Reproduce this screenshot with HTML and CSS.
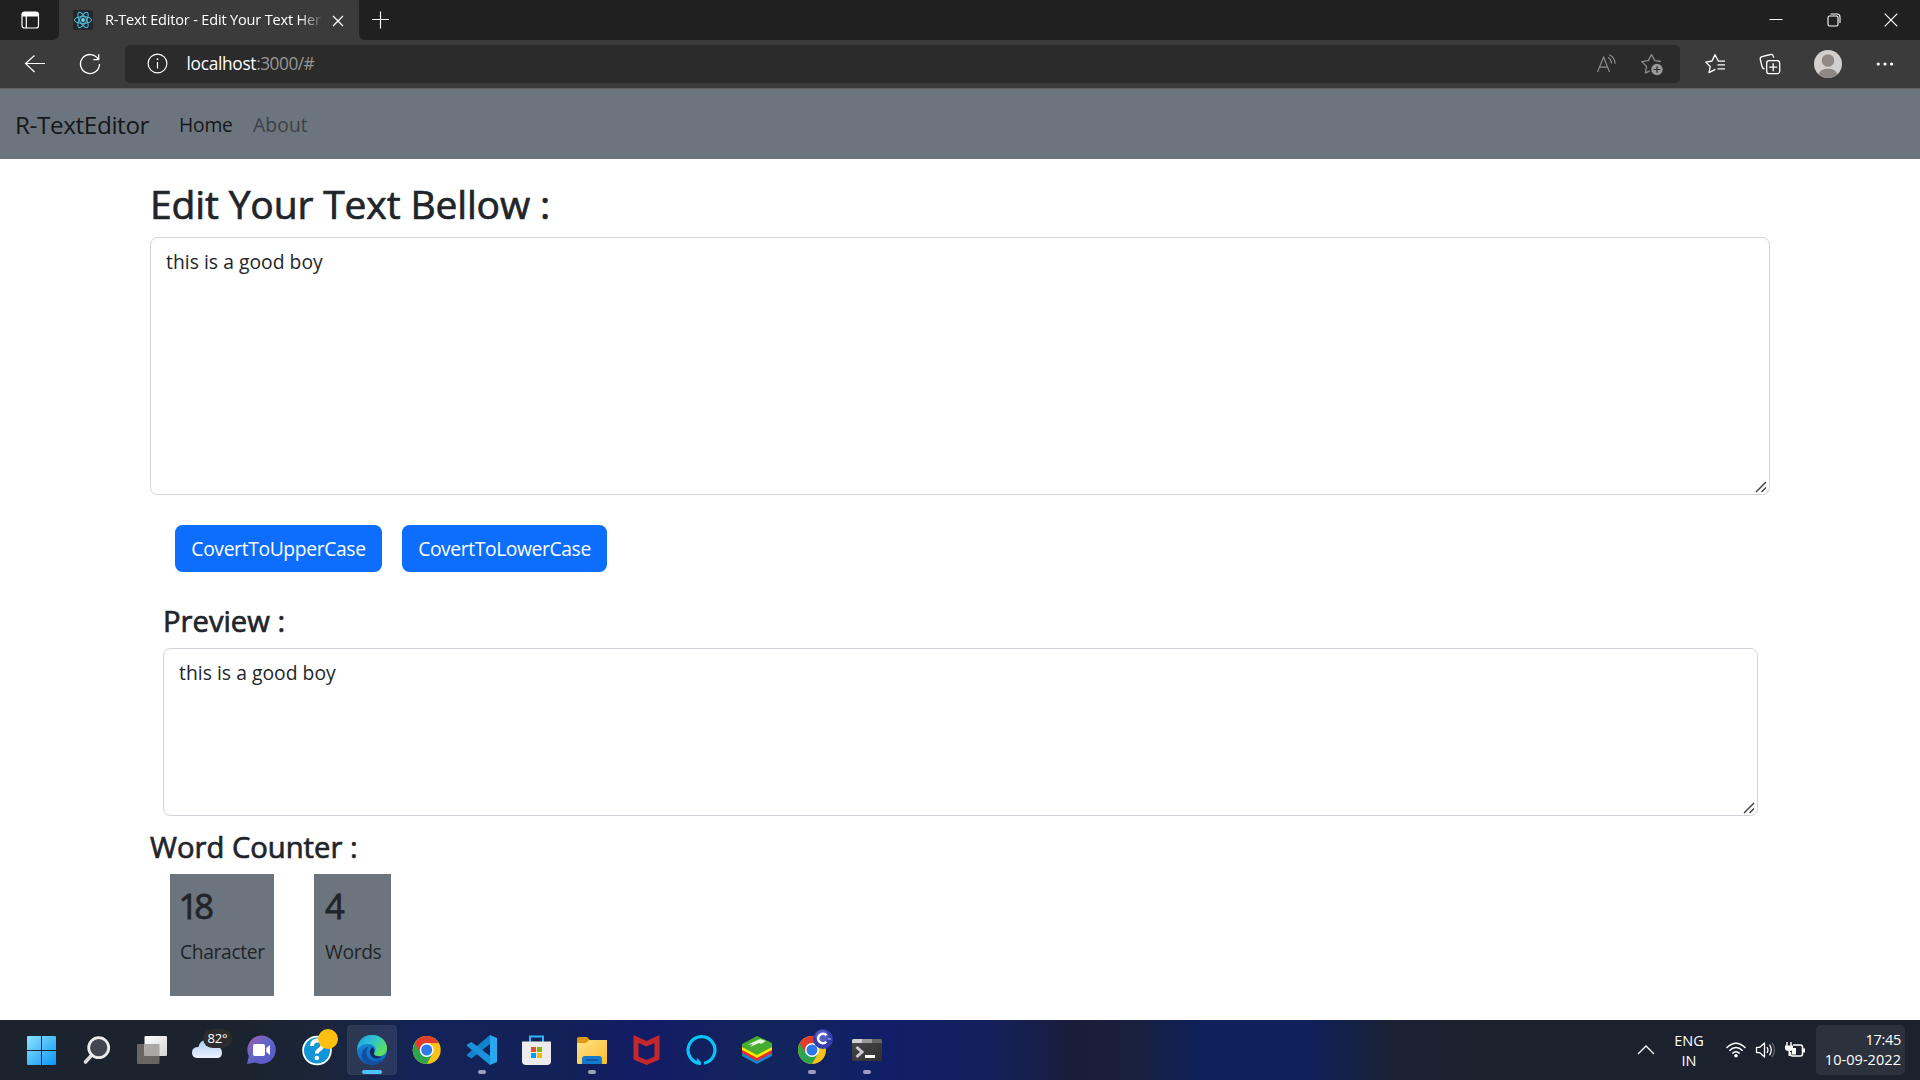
FILE: index.html
```html
<!DOCTYPE html>
<html lang="en">
<head>
<meta charset="utf-8">
<title>R-Text Editor - Edit Your Text Here</title>
<link rel="stylesheet" href="styles.css">
</head>
<body>
<div class="screen">
  <header class="tabstrip">
    <div class="tab-actions">
      <svg width="20" height="20" viewBox="0 0 20 20"><rect x="2" y="2" width="16.5" height="16" rx="2.6" fill="none" stroke="#fff" stroke-width="1.2"/><path d="M2 6.5V4.5Q2 2 4.5 2h11.5q2.500 0 2.500 2.500v2z" fill="#fff"/><path d="M6.300 6v12" stroke="#fff" stroke-width="1.200"/></svg>
    </div>
    <div class="tab">
      <svg class="favicon" width="20" height="20" viewBox="0 0 20 20"><rect width="20" height="20" rx="2" fill="#23272b"/><g fill="none" stroke="#53c1de" stroke-width="1"><ellipse cx="10" cy="10" rx="8.600" ry="3.400"/><ellipse cx="10" cy="10" rx="8.600" ry="3.400" transform="rotate(60 10 10)"/><ellipse cx="10" cy="10" rx="8.600" ry="3.400" transform="rotate(120 10 10)"/></g><circle cx="10" cy="10" r="1.900" fill="#61dafb"/></svg>
      <span class="tab-title">R-Text Editor - Edit Your Text Her</span>
      <svg class="tab-close" width="12" height="12" viewBox="0 0 12 12"><path d="M1 1l10 10M11 1L1 11" stroke="#fff" stroke-width="1.300"/></svg>
    </div>
    <svg class="new-tab" width="18" height="18" viewBox="0 0 18 18"><path d="M8.500 .5v17M0 8.500h17" stroke="#fff" stroke-width="1.200"/></svg>
    <div class="window-controls">
      <svg width="14" height="14" viewBox="0 0 14 14"><path d="M.5 6.500h13" stroke="#fff"/></svg>
      <svg width="14" height="14" viewBox="0 0 14 14"><rect x="1" y="3" width="10" height="10" rx="1.500" fill="none" stroke="#fff" stroke-width="1.100"/><path d="M3.500 1h6.500q3 0 3 3v6" fill="none" stroke="#fff" stroke-width="1.100"/></svg>
      <svg width="14" height="14" viewBox="0 0 14 14"><path d="M.7.7l12.600 12.600M13.300.7L.7 13.300" stroke="#fff" stroke-width="1.200"/></svg>
    </div>
  </header>

  <div class="toolbar">
    <svg width="22" height="20" viewBox="0 0 22 20"><path d="M21 9.500H1.500M10.500 1.500L1.500 9.500 10.500 18" fill="none" stroke="#fff" stroke-width="1.200"/></svg>
    <svg class="refresh" width="22" height="22" viewBox="0 0 22 22"><path d="M19.200 6.200A9.500 9.500 0 1 0 20.500 11M19.700 1.300v5.300h-5.400" fill="none" stroke="#fff" stroke-width="1.300"/></svg>
    <div class="address">
      <svg width="22" height="22" viewBox="0 0 22 22"><circle cx="10.500" cy="10.500" r="9.400" fill="none" stroke="#fff" stroke-width="1.200"/><path d="M10.500 9v6.500" stroke="#fff" stroke-width="1.200"/><circle cx="10.500" cy="6.200" r=".9" fill="#fff"/></svg>
      <span class="url"><span class="host">localhost</span><span class="port">:3000/#</span></span>
      <svg class="read" width="22" height="20" viewBox="0 0 22 20"><path d="M1.500 18L7.600 3 13.500 18M3.400 13.200h8.300M12 3.200q3.200 1.800 3.500 6.300M13.300.8q5.400 2.500 5.800 9" fill="none" stroke="#8d8d8d" stroke-width="1.200"/></svg>
      <svg class="star-add" width="24" height="24" viewBox="0 0 24 24"><path d="M20.800 8.500l-6-.9L11.500 1.500 8.300 7.600 1.700 8.600l4.800 4.800-1.100 6.700 4.300-2.200" fill="none" stroke="#8d8d8d" stroke-width="1.300" stroke-linejoin="round"/><circle cx="17" cy="16.500" r="5.700" fill="#9a9a9a"/><path d="M17 13.200v6.600M13.700 16.500h6.600" stroke="#2b2b2b" stroke-width="1.200"/></svg>
    </div>
    <svg class="favs" width="22" height="22" viewBox="0 0 22 22"><path d="M21 8.200h-6.600L11 1.600 8 8 1.800 9.100l4.400 4.400L5.100 19.600l6.200-3.200M13.500 11.800h7.500M13.500 15.800h7.500" fill="none" stroke="#fff" stroke-width="1.300" stroke-linejoin="round"/></svg>
    <svg class="collections" width="22" height="22" viewBox="0 0 22 22"><rect x="7.700" y="7.700" width="13" height="13" rx="2.500" fill="none" stroke="#fff" stroke-width="1.300"/><path d="M14.200 10.200v8M10.200 14.200h8M5.500 16Q3.500 15.500 3 13.500L1.300 6.500Q.8 4.300 3 3.700L11.500 1.500q2.300-.4 2.900 1.900l.3 1.300" fill="none" stroke="#fff" stroke-width="1.300"/></svg>
    <svg class="avatar" width="28" height="28" viewBox="0 0 28 28"><defs><clipPath id="av"><circle cx="14" cy="14" r="14"/></clipPath></defs><g clip-path="url(#av)"><rect width="28" height="28" fill="#d2d0ce"/><circle cx="14" cy="10.500" r="6.300" fill="#8f8884"/><ellipse cx="14" cy="26.500" rx="10" ry="8" fill="#8f8884"/></g></svg>
    <svg class="more" width="18" height="4" viewBox="0 0 18 4"><g fill="#fff"><circle cx="2.300" cy="2" r="1.600"/><circle cx="9" cy="2" r="1.600"/><circle cx="15.600" cy="2" r="1.600"/></g></svg>
  </div>

  <nav class="navbar">
    <a class="brand">R-TextEditor</a>
    <a class="nav-home">Home</a>
    <a class="nav-about">About</a>
  </nav>

  <main class="container">
    <h1>Edit Your Text Bellow :</h1>
    <div class="field">
      <textarea class="box box-main" spellcheck="false">this is a good boy</textarea>
      <svg class="grip" width="12" height="12" viewBox="0 0 12 12"><path d="M1 11L11 1M6.500 11L11 6.500" stroke="#444" stroke-width="1.500"/></svg>
    </div>
    <div class="buttons">
      <button class="upper">CovertToUpperCase</button>
      <button class="lower">CovertToLowerCase</button>
    </div>
    <section class="preview">
      <h2>Preview :</h2>
      <div class="field">
        <textarea class="box box-preview" spellcheck="false">this is a good boy</textarea>
        <svg class="grip" width="12" height="12" viewBox="0 0 12 12"><path d="M1 11L11 1M6.500 11L11 6.500" stroke="#444" stroke-width="1.500"/></svg>
      </div>
    </section>
    <h2 class="counter-title">Word Counter :</h2>
    <div class="counters">
      <div class="counter chars"><strong>18</strong><span>Character</span></div>
      <div class="counter words"><strong>4</strong><span>Words</span></div>
    </div>
  </main>

  <footer class="taskbar">
    <svg width="0" height="0" class="defs"><defs>
      <linearGradient id="win" x1="0" y1="0" x2="1" y2="1"><stop offset="0" stop-color="#8be3ff"/><stop offset="1" stop-color="#0a95f5"/></linearGradient>
      <linearGradient id="tv" x1="0" y1="0" x2="1" y2="1"><stop offset="0" stop-color="#fff"/><stop offset="1" stop-color="#d5d5d5"/></linearGradient>
      <linearGradient id="cl" x1="0" y1="0" x2="0" y2="1"><stop offset="0" stop-color="#a9cbf5"/><stop offset="1" stop-color="#eef3fb"/></linearGradient>
      <linearGradient id="chat" x1="0" y1="0" x2="1" y2="1"><stop offset="0" stop-color="#a05fb0"/><stop offset=".45" stop-color="#6264c7"/><stop offset="1" stop-color="#5558cc"/></linearGradient>
      <linearGradient id="edge1" x1="0" y1="0" x2="1" y2=".6"><stop offset="0" stop-color="#1a9be0"/><stop offset=".5" stop-color="#2fc4d0"/><stop offset="1" stop-color="#62df58"/></linearGradient>
      <linearGradient id="edge2" x1="0" y1="0" x2="0" y2="1"><stop offset="0" stop-color="#1796dd"/><stop offset="1" stop-color="#0e62bd"/></linearGradient>
      <linearGradient id="fold" x1="0" y1="0" x2="1" y2="1"><stop offset="0" stop-color="#ffe28a"/><stop offset="1" stop-color="#fdbd2e"/></linearGradient>
      <linearGradient id="term" x1="0" y1="0" x2="1" y2="1"><stop offset="0" stop-color="#484848"/><stop offset="1" stop-color="#303030"/></linearGradient>
      <g id="chrome"><circle r="14" fill="#fbc116"/><path d="M-12.100-7A14 14 0 0 0 0 14L6.100 3.500 0 0z" fill="#2da44e"/><path d="M-12.100-7A14 14 0 0 1 12.100-7H0L-6.100 3.500z" fill="#e33b2e"/><circle r="7" fill="#fff"/><circle r="5.500" fill="#2f78ea"/></g>
    </defs></svg>
    <div class="apps">
      <svg class="app" viewBox="0 0 55 60"><path d="M13 17q0-1 1-1h13v14H13zM28 16h13q1 0 1 1v13H28zM13 31h14v14H14q-1 0-1-1zM28 31h14v13q0 1-1 1H28z" fill="url(#win)"/></svg>
      <svg class="app" viewBox="0 0 55 60"><path d="M21.500 36.500l-5 5.500" stroke="#dedede" stroke-width="3.600" stroke-linecap="round"/><circle cx="29.700" cy="27.700" r="10" fill="#414750" stroke="#ececec" stroke-width="2.800"/></svg>
      <svg class="app" viewBox="0 0 55 60"><rect x="13" y="24" width="22.500" height="20" rx="1" fill="#686663"/><rect x="20.500" y="16" width="22.500" height="20" rx="1" fill="url(#tv)"/><path d="M20.500 24h15v12h-15z" fill="#aaa9a7"/></svg>
      <div class="app weather"><svg viewBox="0 0 55 60"><path d="M19 38q-6 0-6-5.500t6.500-5.500Q21 20 27 20q6.500 0 8.500 6.500 7.500 0 7.500 6t-6 5.500z" fill="url(#cl)"/></svg><span class="badge">82°</span></div>
      <svg class="app" viewBox="0 0 55 60"><path d="M27.500 15.500a14.200 14.200 0 1 1-6.300 26.900L13 44l1.800-8A14.200 14.200 0 0 1 27.500 15.500z" fill="url(#chat)"/><rect x="19" y="24" width="12" height="12" rx="1.800" fill="#fff"/><path d="M32.300 28l3.700-3v10l-3.700-3z" fill="#fff"/></svg>
      <svg class="app" viewBox="0 0 55 60"><circle cx="28" cy="30.500" r="13.900" fill="#1095d6" stroke="#fff" stroke-width="1.800"/><path d="M23 26q.3-5.500 5.500-5.500 5 0 5 4.300 0 2.800-3 4.700-2.700 1.800-2.700 4" fill="none" stroke="#fff" stroke-width="3.800"/><circle cx="27.800" cy="38" r="2.300" fill="#fff"/><circle cx="39" cy="19" r="10" fill="#fdbf10"/></svg>
      <svg class="app" viewBox="0 0 55 60"><rect x="3.500" y="5.500" width="49" height="49" rx="4" fill="#fff" fill-opacity=".09" stroke="#fff" stroke-opacity=".07"/><circle cx="28" cy="30" r="15" fill="url(#edge2)"/><path d="M13.500 26C16 17.500 22 15 28 15c9 0 15 6.500 15 13 0 5.500-3.500 8-8 8-4 0-5.800-1.500-4.500-3.500 2.500-4 0-8.500-6-8.500-4.500 0-8.500 1-11 6z" fill="url(#edge1)"/><path d="M25 26.500c-6 5-1 16 8 14.500 4-.5 6.500-2.500 8-4.500-4 8.500-14 10.500-20 5.500-6-5-3-14.500 4-15.500z" fill="#10509f"/><path d="M28 27q-4 5-.5 9.500 5 4 10.500.3-9 .2-8-4.300 1.500-3-2-5.500z" fill="#16255a"/><rect x="18" y="50" width="20" height="4" rx="2" fill="#4cc2ff"/></svg>
      <svg class="app" viewBox="0 0 55 60"><use href="#chrome" x="27.700" y="30"/></svg>
      <svg class="app" viewBox="0 0 55 60"><path d="M36 15l7 3v24l-7 3z" fill="#29a8f2"/><path d="M36 15v9L17.500 38.500 13 36v-1.500z" fill="#1183cd"/><path d="M36 45v-9L17.500 22 13 24.500V26z" fill="#1b91dc"/><rect x="24" y="50" width="8" height="4" rx="2" fill="#9ba0bd"/></svg>
      <svg class="app" viewBox="0 0 55 60"><path d="M21 22v-5.500h13V22" fill="none" stroke="#31b5f3" stroke-width="2"/><path d="M13 21.500h29V41q0 4-4 4H17q-4 0-4-4z" fill="#ececec"/><path d="M22 27h5v5h-5z" fill="#f04e23"/><path d="M28 27h5v5h-5z" fill="#80b900"/><path d="M22 33h5v5h-5z" fill="#00a1ec"/><path d="M28 33h5v5h-5z" fill="#fdb800"/></svg>
      <svg class="app" viewBox="0 0 55 60"><path d="M13 19q0-2 2-2h8l4 4-3 5H13z" fill="#dc9a10"/><path d="M13 23h9l3-3h18v23q0 1-1 1H14q-1 0-1-1z" fill="url(#fold)"/><path d="M18 44v-5q0-3 3-3h14q3 0 3 3v5z" fill="#1579cc"/><path d="M22 40h12" stroke="#0a4c91" stroke-width="1.300"/><rect x="24" y="50" width="8" height="4" rx="2" fill="#9ba0bd"/></svg>
      <svg class="app" viewBox="0 0 55 60"><path fill-rule="evenodd" d="M14.500 15l13 6 13-6v24.500L27.500 45l-13-5.500zM19.500 23v13.500l8 3.500 8-3.500V23l-8 3.500z" fill="#c2282d"/></svg>
      <svg class="app" viewBox="0 0 55 60"><path d="M26.500 43.400A13.400 13.400 0 1 1 30 43.200" fill="none" stroke="#05c5fa" stroke-width="3.200"/><path d="M27 45q.5-4-4.500-7l1.500 6z" fill="#05c5fa"/></svg>
      <svg class="app" viewBox="0 0 55 60"><path d="M13 33l15-7 15 7v3l-15 8-15-8z" fill="#1387d0"/><path d="M13 30l15-7 15 7v3l-15 8-15-8z" fill="#e6292d"/><path d="M13 27l15-7 15 7v3l-15 8-15-8z" fill="#ffe500"/><path d="M13 24l15-8 15 7v4l-15 8-15-8z" fill="#46ac31"/><path d="M18 25l13-6 6 2-5 3-2-1-9 4 3-3z" fill="#e7f5d8"/></svg>
      <svg class="app" viewBox="0 0 55 60"><use href="#chrome" x="28" y="30"/><circle cx="39" cy="19" r="10" fill="#343fae"/><circle cx="38" cy="16.500" r="6.500" fill="#6871cf" fill-opacity=".6"/><path d="M42.500 15.300a4.800 4.800 0 1 0 0 6.400" fill="none" stroke="#fff" stroke-width="2.400"/><path d="M44 19h3" stroke="#9ba2e6" stroke-width="1.300"/><rect x="24" y="50" width="8" height="4" rx="2" fill="#9ba0bd"/></svg>
      <svg class="app" viewBox="0 0 55 60"><rect x="13" y="19" width="30" height="22" rx="1.500" fill="url(#term)"/><path d="M13 23v-2.500q0-1.500 1.500-1.500H23v4z" fill="#d0d0d0"/><path d="M23 19h10v4H23z" fill="#999"/><path d="M33 19h8.500q1.500 0 1.500 1.500V23H33z" fill="#666"/><path d="M17.500 27l5.500 5-5.500 5" fill="none" stroke="#ccc" stroke-width="3"/><path d="M26 36.500h10" stroke="#fff" stroke-width="3"/><rect x="24" y="50" width="8" height="4" rx="2" fill="#9ba0bd"/></svg>
    </div>
    <div class="tray">
      <svg class="chevron" width="18" height="10" viewBox="0 0 18 10"><path d="M1 9l8-8 8 8" fill="none" stroke="#fff" stroke-width="1.300"/></svg>
      <div class="lang"><span>ENG</span><span>IN</span></div>
      <svg class="wifi" width="22" height="18" viewBox="0 0 22 18"><g fill="none" stroke="#fff" stroke-width="1.400"><path d="M1.500 7q9.500-9.500 19 0M4.300 9.800q6.700-6.500 13.400 0M7.200 12.600q3.800-3.600 7.600 0"/></g><circle cx="11" cy="14.800" r="1.800" fill="#fff"/></svg>
      <svg class="speaker" width="22" height="18" viewBox="0 0 22 18"><path d="M1.500 6.300h3.300L9.500 2v14l-4.700-4.300H1.500z" fill="none" stroke="#fff" stroke-width="1.300" stroke-linejoin="round"/><path d="M12 6q2 3 0 6M14.500 3.700q3.600 5.300 0 10.600" fill="none" stroke="#fff" stroke-width="1.200"/><path d="M17 1.800q5 7.200 0 14.400" fill="none" stroke="#656a72" stroke-width="1.200"/></svg>
      <svg class="battery" width="22" height="18" viewBox="0 0 22 18"><path d="M9 4h7.500q2 0 2 2v7q0 2-2 2H8.500q-2 0-2-2v-2" fill="none" stroke="#fff" stroke-width="1.500"/><path d="M19 7.500h2v4h-2zM8 7h4v6.500H8zM1 4.500h8v2.500q0 3-3 3v5H4.500V10Q1 10 1 7z" fill="#fff"/><path d="M3 1v4M7 1v4" stroke="#fff" stroke-width="1.400"/></svg>
      <div class="clock"><span class="time">17:45</span><span class="date">10-09-2022</span></div>
    </div>
  </footer>
</div>
</body>
</html>
```
FILE: styles.css
```css
* { box-sizing: border-box; }
body {
  margin: 0;
  background: #fff;
  color: #212529;
  font-family: "Open Sans", "Noto Sans", sans-serif;
  font-size: 19.3px;
}
svg { display: block; flex: none; }
.screen { width: 1920px; height: 1080px; display: flex; flex-direction: column; overflow: hidden; white-space: nowrap; }

/* tab strip */
.tabstrip { height: 40px; display: flex; background: #3b3b3b; flex: none; }
.tab-actions { width: 59px; padding: 10px 0 0 20px; background: #202020; border-radius: 0 0 6px 0; }
.tab { width: 300px; height: 40px; display: flex; align-items: center; padding-left: 14px; background: #3b3b3b; border-radius: 8px 8px 0 0; }
.tab-title {
  width: 217px; margin-left: 12px;
  font-size: 14.5px; line-height: 24px; letter-spacing: -.16px; color: #fff; padding-bottom: 1px;
  -webkit-mask-image: linear-gradient(to right, #000 195px, rgba(0, 0, 0, .1) 217px);
  mask-image: linear-gradient(to right, #000 195px, rgba(0, 0, 0, .1) 217px);
}
.tab-close { margin: 1px 0 0 10px; }
.new-tab { width: 31px; height: 40px; padding: 11px 0 11px 13px; background: #202020; border-radius: 0 0 0 6px; }
.window-controls { flex: 1; justify-content: flex-end; padding: 13px 22px 0 0; display: flex; gap: 43.500px; background: #202020; }

/* toolbar */
.toolbar { height: 49px; display: flex; align-items: center; padding-left: 24px; background: #3b3b3b; border-bottom: 1px solid #655f5d; flex: none; }
.refresh { margin-left: 33px; }
.address { width: 1555px; height: 38px; margin: 0 0 0 24px; padding-left: 22px; display: flex; align-items: center; background: #2b2b2b; border-radius: 5px; }
.url { margin: 0 0 1px 17.500px; display: flex; font-size: 17.3px; line-height: 24px; }
.host { color: #fff; letter-spacing: -.3px; }
.port { color: #969696; letter-spacing: -.5px; }
.read { margin-left: auto; }
.star-add { margin: 2px 16px 0 22px; }
.favs { margin-left: 24px; }
.collections { margin-left: 33px; }
.avatar { margin-left: 33px; }
.more { margin-left: 34px; }

/* navbar */
.navbar { height: 70px; display: flex; align-items: center; padding-left: 15px; background: #6c757d; flex: none; }
.brand { width: 164px; font-size: 24.3px; letter-spacing: -.4px; color: #15171a; }
.nav-home { width: 74px; letter-spacing: -.2px; color: #15171a; }
.nav-about { letter-spacing: .1px; color: #3c4146; }

/* page */
.container { flex: 1; width: 1620px; margin: 0 auto; padding-top: 21px; }
h1, h2 { margin: 0; font-weight: 500; line-height: 1.2; -webkit-text-stroke: .7px #212529; }
h1 { font-size: 39px; height: 57px; line-height: 48px; letter-spacing: -.14px; }
h2 { font-size: 29.2px; height: 46px; line-height: 38px; letter-spacing: 0; }
.field { position: relative; }
.box {
  display: block; width: 100%; margin: 0; padding: 9px 15px 5px; resize: none; outline: 0;
  border: 1px solid #ced4da; border-radius: 7.500px; background: #fff;
  color: #212529; font: inherit; line-height: 30px; letter-spacing: .04px;
}
.box-main { height: 258px; }
.box-preview { height: 168px; }
.grip { position: absolute; right: 3px; bottom: 2px; }
.buttons { display: flex; gap: 20px; padding: 30px 0 0 25px; }
button { height: 47px; padding: 0 0 1px; border: 0; border-radius: 7.500px; background: #0d6efd; color: #fff; font: inherit; }
.upper { width: 207px; letter-spacing: -.36px; }
.lower { width: 205px; letter-spacing: -.39px; }
.preview { padding: 30px 12px 0 13px; }
.counter-title { margin-top: 12px; }
.counters { display: flex; gap: 40px; padding-left: 20px; }
.counter { height: 122px; padding: 11px 10px; background: #6c757d; display: flex; flex-direction: column; align-items: flex-start; letter-spacing: -.38px; }
.chars { width: 104px; }
.words { width: 77px; padding-left: 11px; }
.counter strong { font-size: 34.5px; font-weight: 500; line-height: 42px; margin-bottom: 11px; -webkit-text-stroke: .8px #212529; }
.chars strong { letter-spacing: -4px; margin-left: -1.500px; }

/* taskbar */
.taskbar {
  height: 60px; display: flex; flex: none; color: #fff;
  background: linear-gradient(90deg, #1b232e 0, #1b232e 240px, #1b2538 320px, #132357 420px, #122158 560px, #131c66 650px, #12255a 760px, #111e68 890px, #14205a 990px, #1a1d38 1080px, #19203c 1130px, #10205a 1200px, #10205a 1310px, #1a2234 1390px, #1c222d 1500px, #1c222d 100%);
}
.defs { position: absolute; }
.apps { display: flex; padding-left: 14px; }
.app { width: 55px; height: 60px; }
.weather { position: relative; }
.badge { position: absolute; left: 24px; top: 9px; width: 29px; height: 19px; border-radius: 10px; background: #2c2c2c; font-size: 13px; line-height: 19px; letter-spacing: -.2px; text-align: center; }
.tray { margin-left: auto; display: flex; align-items: center; font-size: 14.5px; line-height: 20px; padding-right: 15px; }
.lang { display: flex; flex-direction: column; align-items: center; width: 30px; margin: 0 21px 0 19px; padding-top: 1px; }
.speaker { margin-left: 8px; }
.battery { margin: 0 10px 0 7px; }
.clock { width: 89px; height: 50px; padding: 5px 4px 0 0; border-radius: 5px; background: #2c323d; display: flex; flex-direction: column; align-items: flex-end; }
.time { letter-spacing: -.3px; }
.date { letter-spacing: .05px; }
```
